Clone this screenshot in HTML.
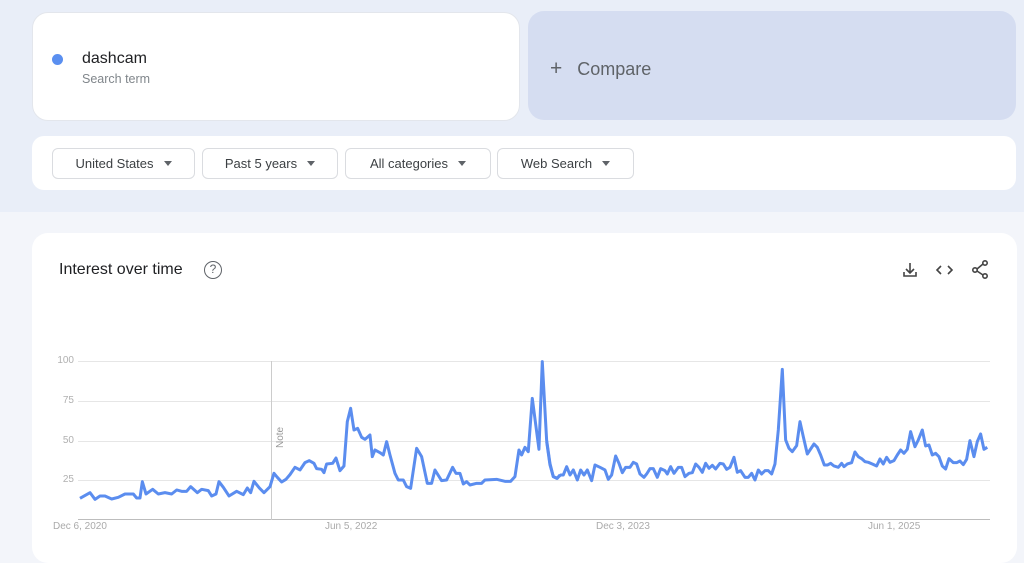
<!DOCTYPE html>
<html><head><meta charset="utf-8"><style>
*{margin:0;padding:0;box-sizing:border-box}
body{width:1024px;height:550px;overflow:hidden;background:#f3f5fa;font-family:"Liberation Sans",Arial,sans-serif;position:relative}
.top{position:absolute;left:0;top:0;width:1024px;height:212px;background:#e9eef8}
.card{position:absolute;background:#fff;border-radius:16px}
.sel{position:absolute;top:148px;height:31px;border:1px solid #dadce0;border-radius:6px;background:#fff;font-size:13px;color:#3c4043;line-height:29px;text-align:center}
.sel:after{content:"";display:inline-block;margin-left:10px;border-left:4px solid transparent;border-right:4px solid transparent;border-top:5px solid #5f6368;vertical-align:2px}
.yl{position:absolute;left:40px;width:34px;text-align:right;font-size:10px;color:#b0b0b0}
.xl{position:absolute;top:521px;font-size:10px;color:#aaa}
</style></head><body>
<div class="top"></div>
<div class="card" style="left:32px;top:12px;width:488px;height:109px;border:1px solid #e3e6ec"></div>
<div style="position:absolute;left:52px;top:54px;width:11px;height:11px;border-radius:50%;background:#5a8ff0"></div>
<div style="position:absolute;left:82px;top:50px;font-size:16px;color:#202124">dashcam</div>
<div style="position:absolute;left:82px;top:72px;font-size:12.5px;color:#80868b">Search term</div>
<div style="position:absolute;left:528px;top:11px;width:488px;height:109px;border-radius:16px;background:#d5ddf1"></div>
<div style="position:absolute;left:550px;top:59px;font-size:18px;color:#5f6368"><span style="font-size:21px;line-height:18px">+</span>&nbsp;&nbsp;&nbsp;Compare</div>
<div class="card" style="left:32px;top:136px;width:984px;height:54px;border-radius:12px"></div>
<div class="sel" style="left:52px;width:143px">United States</div>
<div class="sel" style="left:202px;width:136px">Past 5 years</div>
<div class="sel" style="left:345px;width:146px">All categories</div>
<div class="sel" style="left:497px;width:137px">Web Search</div>
<div class="card" style="left:32px;top:233px;width:985px;height:330px"></div>
<div style="position:absolute;left:59px;top:261px;font-size:16px;color:#202124">Interest over time</div>
<div style="position:absolute;left:204px;top:261px;width:18px;height:18px;border:1.5px solid #5f6368;border-radius:50%;font-size:12px;line-height:15px;text-align:center;color:#5f6368">?</div>
<svg style="position:absolute;left:0;top:0" width="1024" height="550">
<g fill="none" stroke="#444" stroke-width="1.6">
<path d="M910 263v10M906 269l4 4 4-4M904 272v4h12v-4"/>
<path d="M941 266l-4 4 4 4M948 266l4 4-4 4"/>
<circle cx="985" cy="263" r="2.2"/><circle cx="975" cy="270" r="2.2"/><circle cx="985" cy="276" r="2.2"/>
<path d="M977 269l6-5M977 271l6 4"/>
</g>
<g stroke="#e6e6e6" stroke-width="1"><path d="M78 361.5H990M78 401.5H990M78 441.5H990M78 480.5H990"/></g>
<path d="M78 519.5H990" stroke="#bdbdbd"/>
<path d="M271.5 361V520" stroke="#ccc"/>
<text transform="translate(283,448) rotate(-90)" font-size="10" fill="#999" font-family="Liberation Sans">Note</text>
<g fill="none" stroke="#5b8def" stroke-width="9" stroke-linejoin="round" transform="translate(40,340) scale(0.3333)">
<polyline points="120,475 150,458 165,478 180,468 195,468 215,477 235,472 255,462 280,462 290,474 300,474 307,425 318,462 338,448 355,462 375,458 395,462 410,450 425,454 440,454 452,440 472,458 485,448 505,452 515,468 528,462 537,425 550,442 567,468 590,454 610,464 622,444 632,458 642,424 658,444 672,458 690,440 702,400 712,412 725,426 738,418 750,404 765,382 780,390 795,368 808,362 822,370 830,386 845,388 852,398 860,372 878,370 888,354 900,392 912,378 922,245 932,205 942,270 953,265 965,292 975,298 990,285 997,350 1005,330 1020,338 1030,345 1040,305 1050,345 1065,400 1075,420 1090,420 1100,440 1112,445 1130,325 1145,350 1162,430 1175,430 1185,390 1205,422 1220,420 1238,382 1248,400 1260,400 1270,432 1280,425 1290,435 1310,430 1325,430 1335,420 1370,418 1395,424 1412,424 1425,410 1437,330 1445,345 1455,322 1465,335 1477,175 1497,328 1507,65 1520,300 1530,370 1540,410 1552,415 1560,405"/>
</g>
<g fill="none" stroke="#5b8def" stroke-width="9" stroke-linejoin="round" transform="translate(500,340) scale(0.3333)">
<polyline points="140,305 150,375 160,410 170,415 182,405 190,405 200,380 210,405 220,390 232,420 242,390 252,405 262,390 275,422 285,375 300,382 315,390 325,418 335,405 347,348 357,370 367,398 377,382 390,382 400,367 410,372 420,402 432,412 440,402 450,386 460,386 472,412 482,386 495,392 502,402 512,380 522,400 535,382 545,382 555,410 567,400 577,398 587,372 597,382 607,397 617,370 627,385 637,376 647,387 660,370 670,372 680,388 690,382 702,352 712,397 722,392 735,412 745,412 755,400 765,420 775,390 785,402 795,392 805,392 815,402 825,372 835,270 847,88 857,300 867,325 877,335 890,317 900,245 910,290 922,342 930,330 942,312 952,322 962,345 973,375 983,375 992,370 1002,378 1015,382 1025,370 1032,380 1042,372 1055,368 1065,336 1075,350 1085,356 1095,365 1105,367 1117,372 1130,378 1140,357 1150,372 1160,352 1170,367 1182,362 1192,345 1202,330 1212,340 1222,328 1232,275 1245,320 1255,300 1267,270 1277,318 1287,315 1297,345 1307,340 1317,350 1327,378 1337,387 1347,356 1360,368 1370,368 1380,363 1390,374 1400,358 1410,302 1422,350 1432,305 1442,282 1452,328 1462,322"/>
</g>
</svg>
<div class="yl" style="top:355px">100</div>
<div class="yl" style="top:395px">75</div>
<div class="yl" style="top:435px">50</div>
<div class="yl" style="top:474px">25</div>
<div class="xl" style="left:53px">Dec 6, 2020</div>
<div class="xl" style="left:325px">Jun 5, 2022</div>
<div class="xl" style="left:596px">Dec 3, 2023</div>
<div class="xl" style="left:868px">Jun 1, 2025</div>
</body></html>
